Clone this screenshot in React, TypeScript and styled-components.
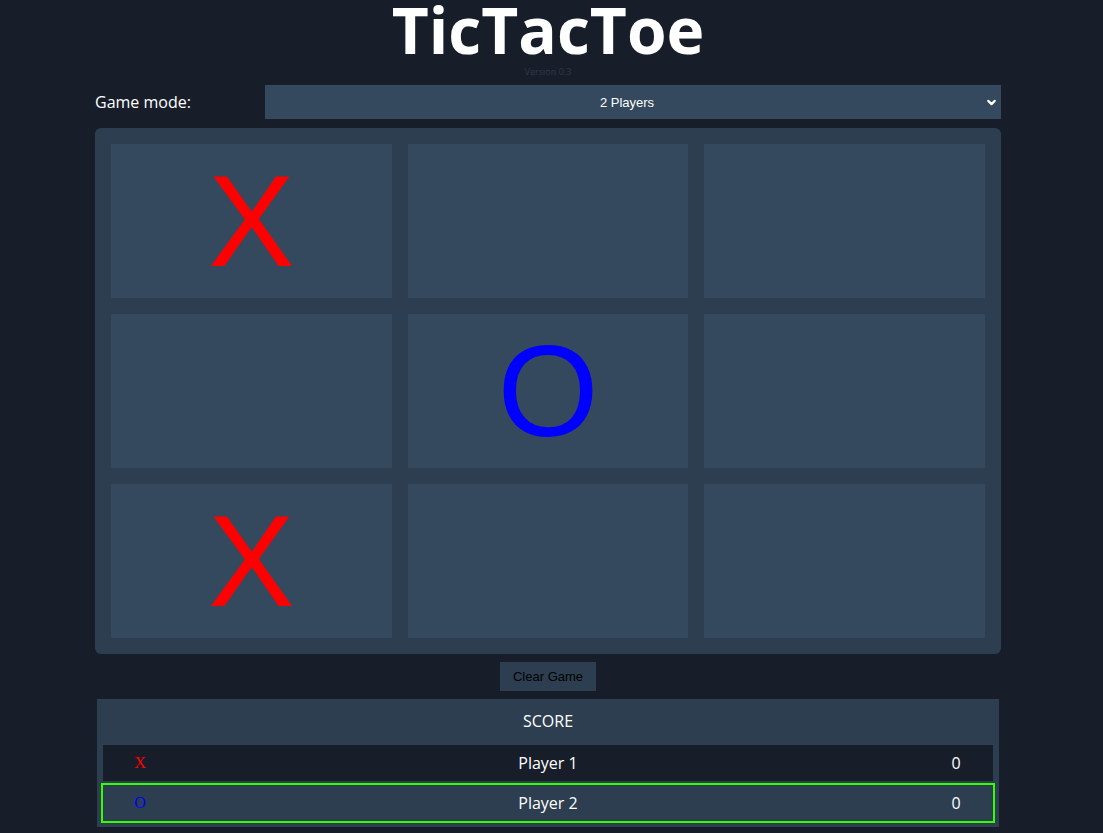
import styled, { createGlobalStyle } from "styled-components";
import { ChevronDown } from "lucide-react";

type Mark = "X" | "O" | "";

const board: Mark[] = ["X", "", "", "", "O", "", "X", "", ""];

const players = [
  { mark: "X" as Mark, name: "Player 1", score: 0, active: false },
  { mark: "O" as Mark, name: "Player 2", score: 0, active: true },
];

const App = () => {
  return (
    <Page>
      <GlobalStyle />
      <Title>TicTacToe</Title>
      <Version>Version 0.3</Version>

      <ModeRow>
        <Label>Game mode:</Label>
        <SelectWrap>
          <ModeSelect defaultValue="2">
            <option value="1">1 Player</option>
            <option value="2">2 Players</option>
          </ModeSelect>
          <span className="arrow">
            <ChevronDown size={13} strokeWidth={4} />
          </span>
        </SelectWrap>
      </ModeRow>

      <Board>
        {board.map((m, i) => (
          <Cell key={i} $mark={m}>
            {m}
          </Cell>
        ))}
      </Board>

      <ButtonRow>
        <ClearButton>Clear Game</ClearButton>
      </ButtonRow>

      <Score>
        <ScoreHead>SCORE</ScoreHead>
        {players.map((p) => (
          <ScoreRow key={p.name} $active={p.active}>
            <Symbol $mark={p.mark}>{p.mark}</Symbol>
            <span>{p.name}</span>
            <span>{p.score}</span>
          </ScoreRow>
        ))}
      </Score>
    </Page>
  );
};

export default App;

const GlobalStyle = createGlobalStyle`
  html, body {
    margin: 0;
    background: #171e2a;
  }
  body {
    font-family: "Open Sans", "DejaVu Sans", sans-serif;
    color: #fff;
  }
`;

const Page = styled.div`
  width: 906px;
  margin-left: 95px;
  display: flex;
  flex-direction: column;
`;

const Title = styled.h1`
  margin: 0;
  font-size: 64px;
  line-height: 60px;
  font-weight: 700;
  text-align: center;
  color: #fff;
`;

const Version = styled.div`
  margin-top: 6px;
  font-size: 9px;
  line-height: 12px;
  text-align: center;
  color: #2f3a49;
`;

const ModeRow = styled.div`
  margin-top: 7px;
  display: flex;
  align-items: center;
  height: 34px;
`;

const Label = styled.label`
  width: 170px;
  flex-shrink: 0;
  font-size: 16px;
  color: #fff;
`;

const SelectWrap = styled.div`
  position: relative;
  flex: 1;
  height: 100%;

  .arrow {
    position: absolute;
    right: 3px;
    top: 11px;
    color: #fff;
    pointer-events: none;
    display: flex;
  }
`;

const ModeSelect = styled.select`
  appearance: none;
  width: 100%;
  height: 100%;
  border: none;
  outline: none;
  background: #34495e;
  color: #fff;
  font-family: "Liberation Sans", Arial, sans-serif;
  font-size: 13px;
  text-align: center;
  text-align-last: center;
  padding: 0 12px 0 0;
  border-radius: 0;
`;

const Board = styled.div`
  margin-top: 9px;
  background: #2c3e50;
  border-radius: 6px;
  padding: 16px;
  display: grid;
  grid-template-columns: repeat(3, 1fr);
  grid-auto-rows: 154px;
  gap: 16px;
`;

const Cell = styled.div<{ $mark: Mark }>`
  background: #34495e;
  display: flex;
  align-items: center;
  justify-content: center;
  font-family: "Liberation Sans", Arial, sans-serif;
  font-size: 130px;
  line-height: 1;
  color: ${(p) => (p.$mark === "X" ? "#ff0000" : "#0000ff")};
`;

const ButtonRow = styled.div`
  margin-top: 8px;
  display: flex;
  justify-content: center;
`;

const ClearButton = styled.button`
  width: 96px;
  height: 29px;
  border: none;
  background: #2c3e50;
  color: #000;
  font-family: "Liberation Sans", Arial, sans-serif;
  font-size: 13px;
  padding: 0;
`;

const Score = styled.div`
  margin: 8px 2px 0 2px;
  background: #2c3e50;
  padding: 0 6px 6px 6px;
  display: flex;
  flex-direction: column;
  gap: 4px;
`;

const ScoreHead = styled.div`
  height: 42px;
  display: flex;
  align-items: center;
  justify-content: center;
  font-size: 16px;
  padding-top: 2px;
  box-sizing: border-box;
`;

const ScoreRow = styled.div<{ $active: boolean }>`
  height: 36px;
  display: grid;
  grid-template-columns: 74px 1fr 74px;
  align-items: center;
  text-align: center;
  font-size: 16px;
  color: #fff;
  background: ${(p) => (p.$active ? "#2c3e50" : "#171e2a")};
  outline: ${(p) => (p.$active ? "2px solid #33ff00" : "none")};
`;

const Symbol = styled.span<{ $mark: Mark }>`
  font-family: "Liberation Serif", "Times New Roman", serif;
  color: ${(p) => (p.$mark === "X" ? "#ff0000" : "#0000ff")};
`;
